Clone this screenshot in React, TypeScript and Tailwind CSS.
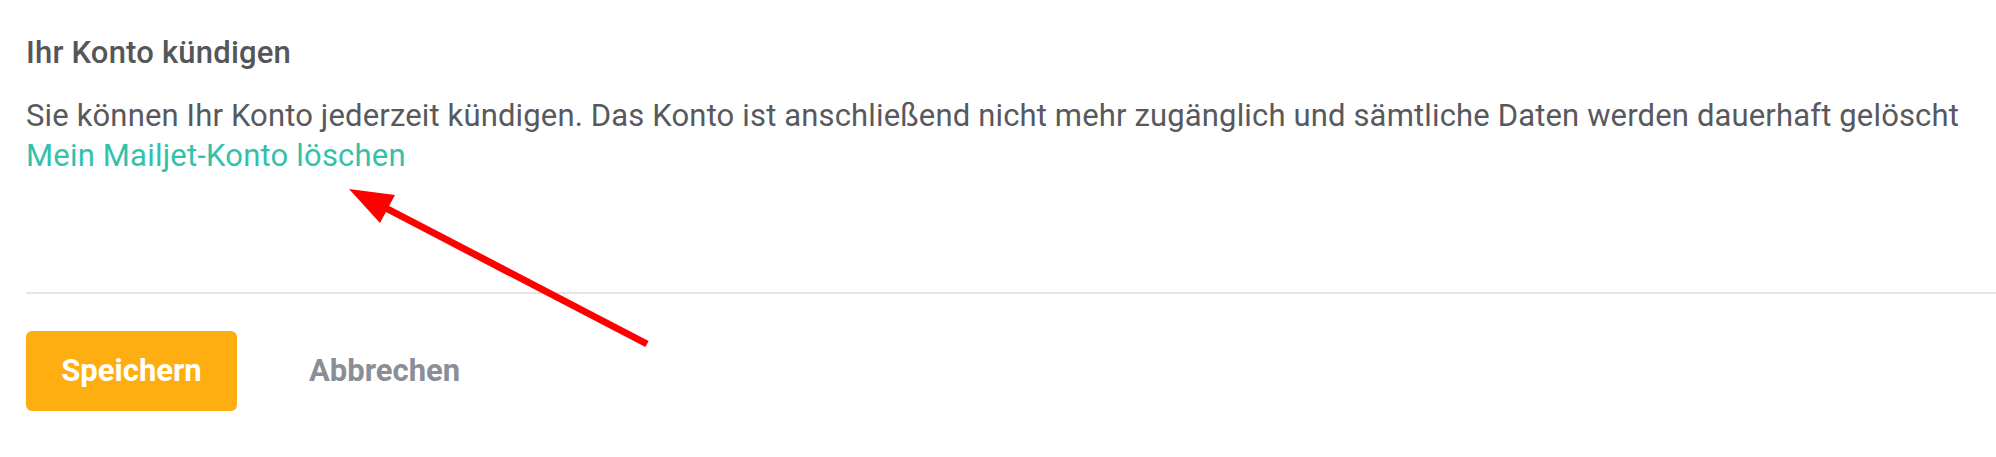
export default function App() {
  return (
    <div className="relative h-[457px] w-full overflow-hidden bg-white font-['Roboto',sans-serif]">
      <div className="pl-[26px] pt-[33px]">
        <h3 className="text-[31px] leading-[40px] tracking-[0.2px] font-medium text-[#555659]">Ihr Konto kündigen</h3>

        <div className="mt-[23px] text-[31px] leading-[40px] tracking-[0.15px] text-[#57595e]">
          <p>
            Sie können Ihr Konto jederzeit kündigen. Das Konto ist anschließend nicht mehr zugänglich und sämtliche Daten werden dauerhaft gelöscht
          </p>
          <a href="#" className="tracking-[0.2px] text-[#34c1ab]">
            Mein Mailjet-Konto löschen
          </a>
        </div>
      </div>

      <div className="ml-[26px] mt-[116px] h-[2px] bg-[#e6e6e6]"></div>

      <div className="flex items-center pl-[26px] pt-[37px]">
        <button className="flex h-[80px] w-[211px] items-center justify-center rounded-[6px] bg-[#ffae12] text-[31px] font-bold text-white">
          Speichern
        </button>
        <button className="ml-[72px] text-[31px] font-bold text-[#8a8e97]">Abbrechen</button>
      </div>

      {/* annotation arrow */}
      <svg className="pointer-events-none absolute left-0 top-0" width="1996" height="457" viewBox="0 0 1996 457">
        <line x1="647" y1="344" x2="378" y2="204" stroke="#ff0000" strokeWidth="7" />
        <polygon points="349,189 395,195 380,223" fill="#ff0000" />
      </svg>
    </div>
  );
}
